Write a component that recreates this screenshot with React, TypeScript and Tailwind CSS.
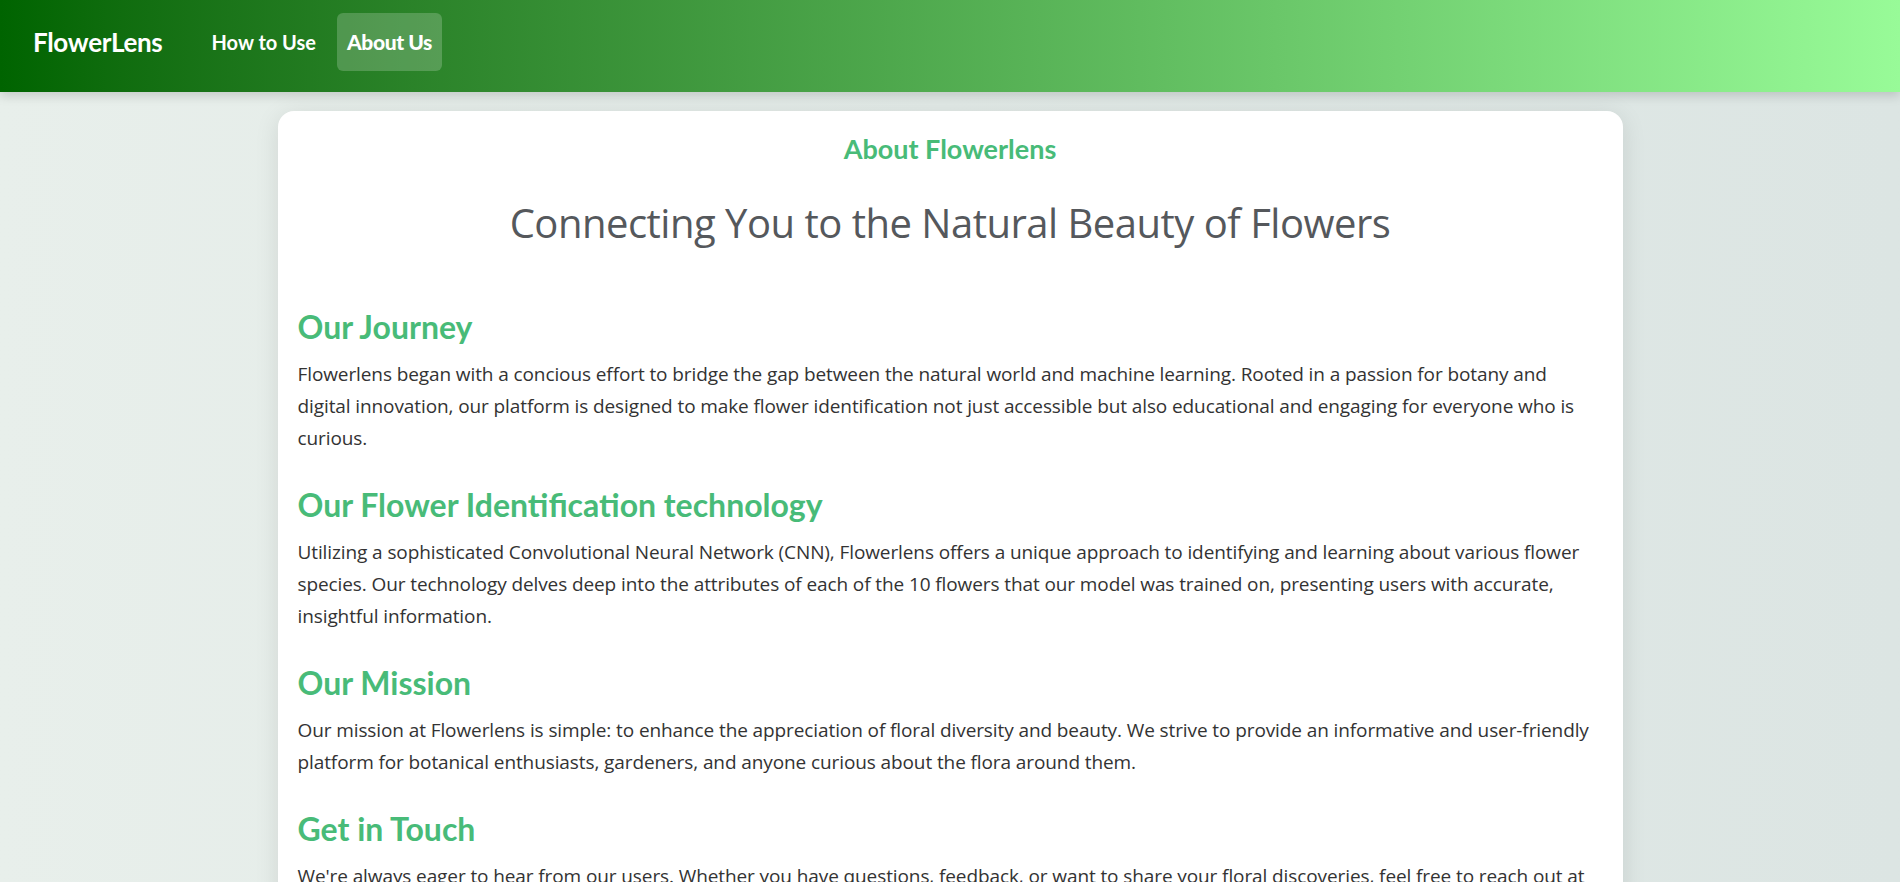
import React from 'react';

const sections = [
  {
    title: 'Our Journey',
    body: 'Flowerlens began with a concious effort to bridge the gap between the natural world and machine learning. Rooted in a passion for botany and digital innovation, our platform is designed to make flower identification not just accessible but also educational and engaging for everyone who is curious.',
  },
  {
    title: 'Our Flower Identification technology',
    body: 'Utilizing a sophisticated Convolutional Neural Network (CNN), Flowerlens offers a unique approach to identifying and learning about various flower species. Our technology delves deep into the attributes of each of the 10 flowers that our model was trained on, presenting users with accurate, insightful information.',
  },
  {
    title: 'Our Mission',
    body: 'Our mission at Flowerlens is simple: to enhance the appreciation of floral diversity and beauty. We strive to provide an informative and user-friendly platform for botanical enthusiasts, gardeners, and anyone curious about the flora around them.',
  },
  {
    title: 'Get in Touch',
    body: "We're always eager to hear from our users. Whether you have questions, feedback, or want to share your floral discoveries, feel free to reach out at contact@flowerlens.com.",
  },
];

export default function App() {
  return (
    <div className="min-h-screen bg-gradient-to-r from-[#e8efeb] to-[#dce5e3] font-['Open_Sans',sans-serif]">
      {/* Top bar */}
      <header className="h-[92px] bg-gradient-to-r from-[#006400] to-[#98fb98] shadow-[0_4px_10px_rgba(0,0,0,0.15)] flex items-start pt-[13px] px-[33px] font-['Lato',sans-serif] text-white">
        <div className="h-[58px] flex items-center text-[26px] font-bold tracking-[-0.3px] mr-[49px]">FlowerLens</div>
        <nav className="flex items-center gap-[21px]">
          <a className="text-[20px] font-bold">How to Use</a>
          <a className="text-[21px] font-black tracking-[-0.4px] px-[10px] h-[58px] flex items-center rounded-md bg-white/20">About Us</a>
        </nav>
      </header>

      {/* Content card */}
      <main className="flex justify-center pt-[19px] pb-10">
        <div className="w-[1345px] bg-white rounded-2xl shadow-[0_4px_24px_rgba(0,0,0,0.1)] p-5">
          <h2 className="text-center text-[27px] leading-[36px] font-bold text-[#48bb78] font-['Lato',sans-serif]">
            About Flowerlens
          </h2>
          <h1 className="text-center text-[40px] leading-[48px] mt-8 text-[#55585c] font-['Open_Sans',sans-serif] tracking-[-0.5px]">
            Connecting You to the Natural Beauty of Flowers
          </h1>

          <div className="mt-[60px] flex flex-col gap-[31px]">
            {sections.map((s) => (
              <section key={s.title}>
                <h3 className="text-[32px] leading-[40px] font-bold text-[#48bb78] font-['Lato',sans-serif] mb-[11px]">
                  {s.title}
                </h3>
                <p className="text-[19px] leading-[32px] text-[#333] tracking-[-0.1px]">{s.body}</p>
              </section>
            ))}
          </div>
        </div>
      </main>
    </div>
  );
}
